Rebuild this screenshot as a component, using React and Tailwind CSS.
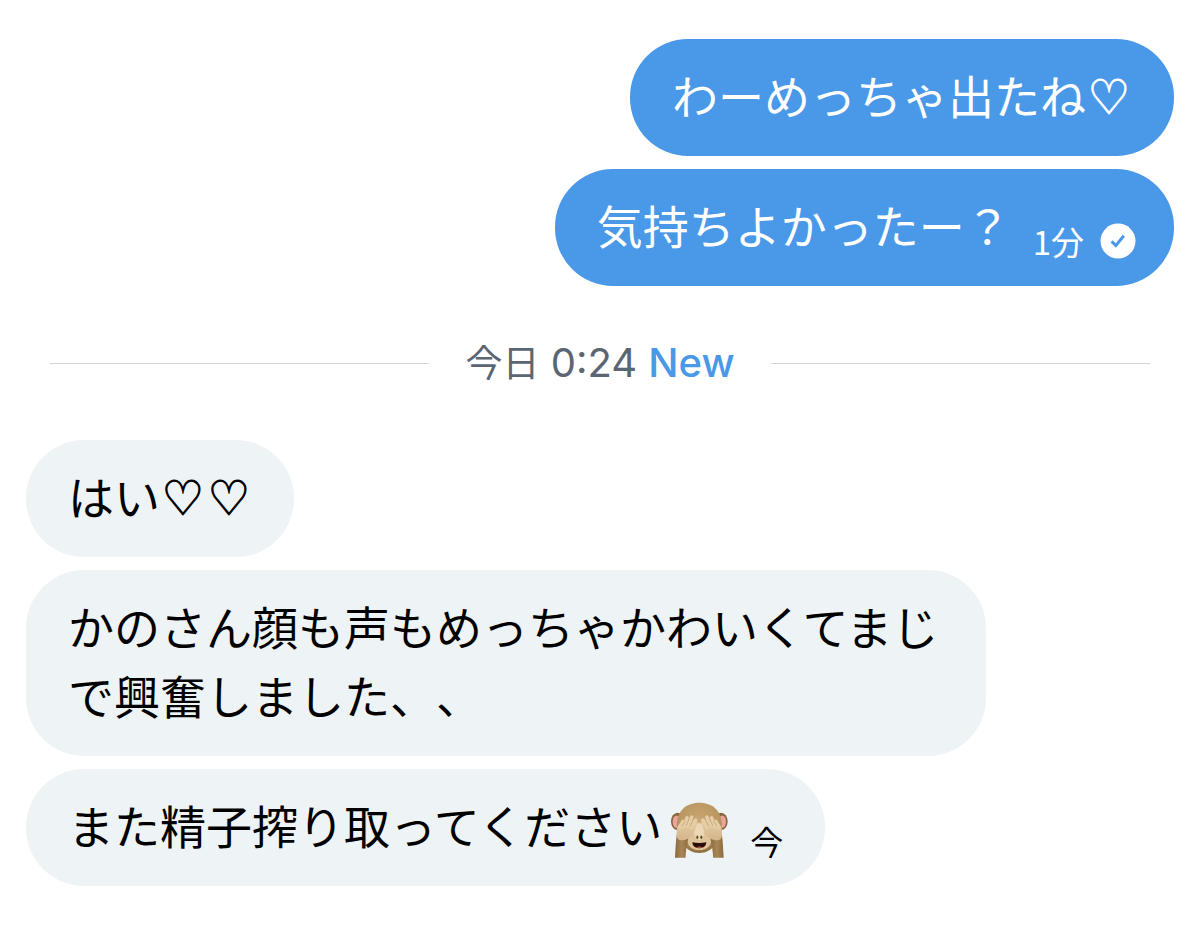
import React from 'react';

const messages = {
  sent: [
    { id: 1, text: 'わーめっちゃ出たね♡' },
    { id: 2, text: '気持ちよかったー？', time: '1分', delivered: true },
  ],
  received: [
    { id: 3, text: 'はい♡♡' },
    { id: 4, text: 'かのさん顔も声もめっちゃかわいくてまじで興奮しました、、' },
    { id: 5, text: 'また精子搾り取ってください', emoji: true, time: '今' },
  ],
};

const CheckBadge = () => (
  <svg viewBox="0 0 36 36" className="w-9 h-9" aria-hidden="true">
    <circle cx="18" cy="18" r="17.5" fill="#fff" />
    <path d="M11.6 18.4l4.2 4.2 8-9.8" fill="none" stroke="#4a98e8" strokeWidth="3" />
  </svg>
);

const MonkeyEmoji = () => (
  <svg viewBox="30 18 176 174" className="w-[58px] h-[58px]" aria-hidden="true">
    <defs>
      <radialGradient id="fur" cx="0.5" cy="0.35" r="0.65">
        <stop offset="0" stopColor="#c9a672" />
        <stop offset="0.7" stopColor="#b9965f" />
        <stop offset="1" stopColor="#8f6c3e" />
      </radialGradient>
      <linearGradient id="hand" x1="0" y1="0" x2="0" y2="1">
        <stop offset="0" stopColor="#e5cda6" />
        <stop offset="1" stopColor="#d3b58b" />
      </linearGradient>
      <linearGradient id="arm" x1="0" y1="0" x2="1" y2="0">
        <stop offset="0" stopColor="#8a693f" />
        <stop offset="0.5" stopColor="#a98655" />
        <stop offset="1" stopColor="#8a693f" />
      </linearGradient>
    </defs>
    {/* ears */}
    <ellipse cx="53" cy="79" rx="20" ry="26" fill="#86643c" />
    <ellipse cx="185" cy="79" rx="20" ry="26" fill="#86643c" />
    <ellipse cx="50" cy="80" rx="12" ry="19" fill="#eba49c" />
    <ellipse cx="188" cy="80" rx="12" ry="19" fill="#eba49c" />
    {/* head */}
    <path d="M119 22c43 0 68 28 68 68 0 44-28 85-68 85S51 134 51 90c0-40 25-68 68-68z" fill="url(#fur)" />
    <path d="M119 82c18 0 24 25 32 38 12 21-2 46-32 46s-44-25-32-46c8-13 14-38 32-38z" fill="#dfc49a" />
    <ellipse cx="119" cy="110" rx="15" ry="25" fill="#ecd8b5" />
    {/* nose and mouth */}
    <ellipse cx="113" cy="127" rx="3" ry="5" fill="#59402a" />
    <ellipse cx="125" cy="127" rx="3" ry="5" fill="#59402a" />
    <path d="M98 142c13 3 29 3 42 0 0 12-9 18-21 18s-21-6-21-18z" fill="#2b0d09" />
    <path d="M109 157c5-3 15-3 20 0-6 4-14 4-20 0z" fill="#a94f42" />
    {/* arms */}
    <path d="M51 116l35 12c-5 21-8 42-9 61H45c2-25 2-49 6-73z" fill="url(#arm)" />
    <path d="M187 116l-35 12c5 21 8 42 9 61h32c-2-25-2-49-6-73z" fill="url(#arm)" />
    {/* hands */}
    <g id="left-hand">
      <path d="M51 102c2-15 13-22 24-24l30-4c9 0 9 8 6 14-4 12-8 28-17 37-12 12-31 15-40 7-4-6-5-19-3-30z" fill="url(#hand)" />
      <g fill="none" stroke="#e5cda6" strokeWidth="11" strokeLinecap="round">
        <path d="M60 98l9-19" />
        <path d="M71 95l11-27" />
        <path d="M84 94l12-28" />
        <path d="M95 98l13-23" />
      </g>
      <g fill="none" stroke="#bd9c6d" strokeWidth="2" strokeLinecap="round">
        <path d="M67 93l8-16" />
        <path d="M79 91l9-20" />
        <path d="M91 93l9-19" />
      </g>
    </g>
    <use href="#left-hand" transform="translate(238 0) scale(-1 1)" />
  </svg>
);

// hearts take a full-width cell like the kana around them
const renderText = (text) =>
  text.split(/(♡)/).map((part, index) =>
    part === '♡' ? (
      <span
        key={index}
        className="inline-block w-[46px] text-center text-[48px] font-['DejaVu_Sans',sans-serif] leading-none [-webkit-text-stroke:1px_currentColor]"
      >
        {part}
      </span>
    ) : (
      part
    )
  );

const Bubble = ({ message, sent }) => (
  <li
    className={`flex items-end max-w-[960px] rounded-[58px] px-[42px] pt-[21px] pb-[27px] text-[46px] leading-[69px] ${
      sent ? 'bg-[#4a98e8] text-white' : 'bg-[#eef3f5] text-black'
    }`}
  >
    <p className="min-w-0 [text-spacing-trim:space-all]">{renderText(message.text)}</p>
    {message.emoji && (
      <span className="flex items-end h-[69px] pl-2">
        <MonkeyEmoji />
      </span>
    )}
    {message.time && (
      <span className="flex shrink-0 items-center gap-4 pl-[22px] text-[33px] leading-9">
        <time>{message.time}</time>
        {message.delivered && (
          <span className="-mr-1">
            <CheckBadge />
          </span>
        )}
      </span>
    )}
  </li>
);

const Divider = () => (
  <div className="flex items-center gap-9 px-6 h-[154px]">
    <span className="h-px flex-1 bg-[#d0d5d9]" />
    <p className="font-['Inter','Noto_Sans_CJK_JP',sans-serif] text-[40px] leading-[48px] text-[#5b6672]">
      <span className="text-[37px]">今日</span> 0:24{' '}
      <span className="font-medium text-[#4a98e8]">New</span>
    </p>
    <span className="h-px flex-1 bg-[#d0d5d9]" />
  </div>
);

const App = () => {
  return (
    <main
      lang="ja"
      className="min-h-screen bg-white px-[26px] pt-[39px] pb-12 font-['Noto_Sans_CJK_JP',sans-serif]"
    >
      <ul className="flex flex-col items-end gap-[13px]">
        {messages.sent.map((message) => (
          <Bubble key={message.id} message={message} sent />
        ))}
      </ul>
      <Divider />
      <ul className="flex flex-col items-start gap-[13px]">
        {messages.received.map((message) => (
          <Bubble key={message.id} message={message} />
        ))}
      </ul>
    </main>
  );
};

export default App;
